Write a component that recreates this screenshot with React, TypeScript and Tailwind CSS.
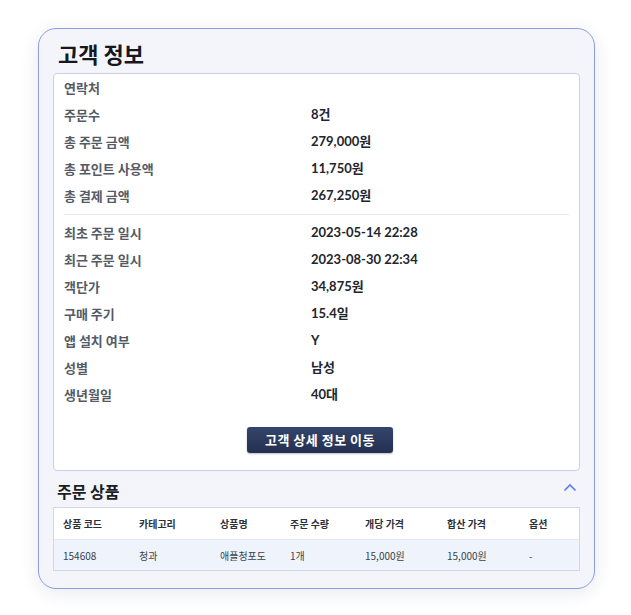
import React from 'react'

const summary = [
  { label: '연락처', value: '' },
  { label: '주문수', value: '8건' },
  { label: '총 주문 금액', value: '279,000원' },
  { label: '총 포인트 사용액', value: '11,750원' },
  { label: '총 결제 금액', value: '267,250원' },
]

const details = [
  { label: '최초 주문 일시', value: '2023-05-14 22:28' },
  { label: '최근 주문 일시', value: '2023-08-30 22:34' },
  { label: '객단가', value: '34,875원' },
  { label: '구매 주기', value: '15.4일' },
  { label: '앱 설치 여부', value: 'Y' },
  { label: '성별', value: '남성' },
  { label: '생년월일', value: '40대' },
]

const columns = ['상품 코드', '카테고리', '상품명', '주문 수량', '개당 가격', '합산 가격', '옵션']
const rows = [['154608', '청과', '애플청포도', '1개', '15,000원', '15,000원', '-']]

const gridCols = 'grid grid-cols-[76px_81px_70px_75px_82px_82px_1fr]'

function InfoRow({ label, value }: { label: string; value: string }) {
  return (
    <div className="grid grid-cols-[247px_1fr] h-[27px] items-center">
      <span className="text-[13px] font-bold text-[#555b66]">{label}</span>
      <span className="text-[13px] font-bold text-[#22252c] font-['Lato','Noto_Sans_CJK_KR',sans-serif]">
        {value}
      </span>
    </div>
  )
}

export default function App() {
  return (
    <div className="min-h-screen bg-white pt-[28px] pl-[38px] font-['Noto_Sans_CJK_KR',sans-serif]">
      <div className="w-[557px] h-[561px] rounded-[18px] border border-[#8e9de2] bg-[#f4f5fa] px-[14px] shadow-[0_4px_18px_rgba(30,40,80,0.10)]">
        <h1 className="pt-[9px] pl-[5px] text-[22px] leading-[30px] font-bold text-[#15181f] mb-[5px]">
          고객 정보
        </h1>

        <div className="rounded-[4px] border border-[#c8d2e6] bg-white px-[10px] pb-[17px]">
          {summary.map((r) => (
            <InfoRow key={r.label} {...r} />
          ))}
          <div className="mt-[5px] mb-[4px] h-px bg-[#e6e8ee]" />
          {details.map((r) => (
            <InfoRow key={r.label} {...r} />
          ))}
          <div className="mt-[19px] flex justify-center pl-[7px]">
            <button className="h-[26px] w-[146px] rounded-[3px] bg-gradient-to-b from-[#34456c] to-[#24304f] text-[13px] font-bold text-white tracking-[0.5px] shadow-[0_1px_2px_rgba(0,0,0,0.25)]">
              고객 상세 정보 이동
            </button>
          </div>
        </div>

        <div className="mt-[10px] mb-[6px] flex items-center justify-between pl-[4px] pr-[3px]">
          <h2 className="text-[16px] leading-[20px] font-bold text-[#1a1d24]">주문 상품</h2>
          <svg width="14" height="9" viewBox="0 0 14 9" fill="none" className="-mt-[7px]">
            <path d="M1.5 7.5L7 2L12.5 7.5" stroke="#5a7cf0" strokeWidth="1.6" />
          </svg>
        </div>

        <div className="border border-[#cfd7e8] bg-white text-[10px]">
          <div className={`${gridCols} h-[32px] items-center px-[9px] font-bold text-[#2c3039] border-b border-[#e3e8f2]`}>
            {columns.map((c) => (
              <span key={c}>{c}</span>
            ))}
          </div>
          {rows.map((r, i) => (
            <div key={i} className={`${gridCols} h-[30px] items-center px-[9px] bg-[#eff4fc] text-[#3a3f4a]`}>
              {r.map((v, j) => (
                <span key={j}>{v}</span>
              ))}
            </div>
          ))}
        </div>
      </div>
    </div>
  )
}
